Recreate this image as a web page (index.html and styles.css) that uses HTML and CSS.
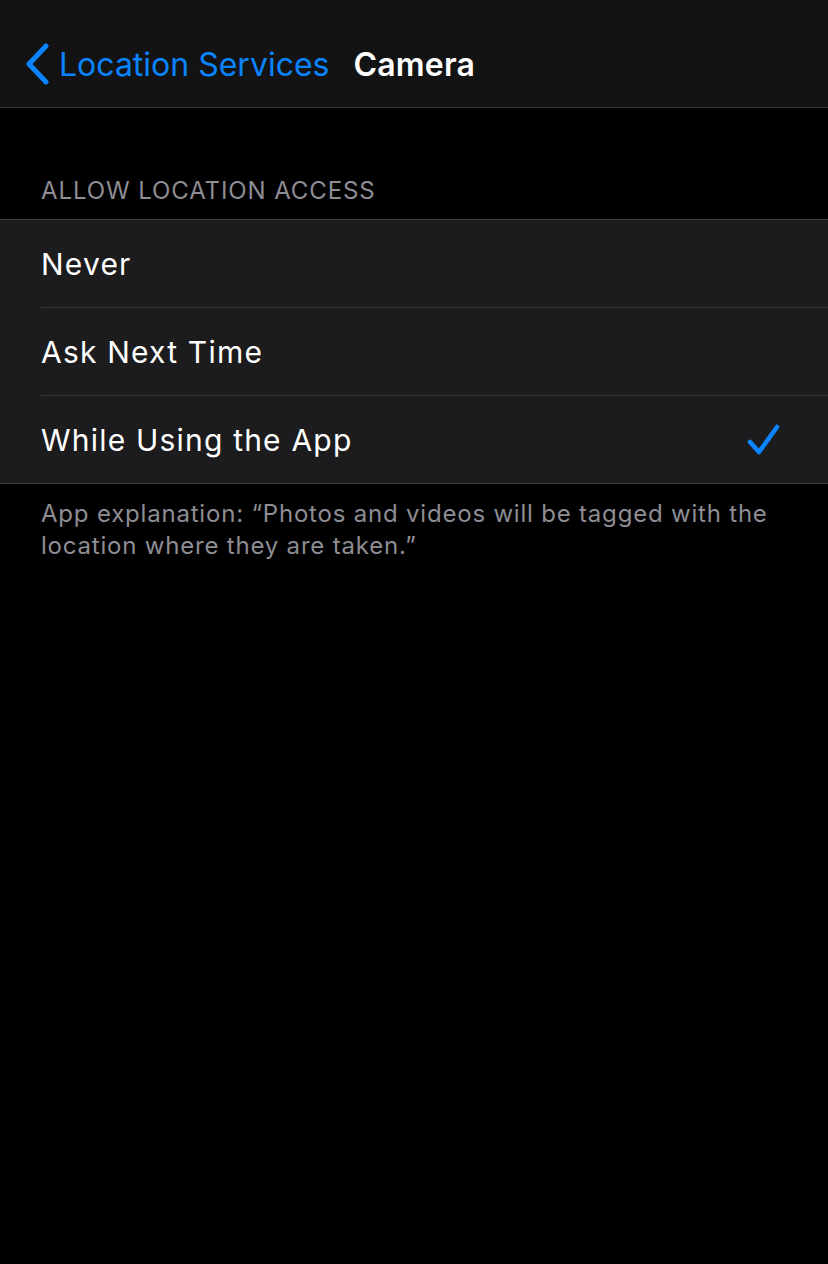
FILE: index.html
```html
<!DOCTYPE html>
<html>
<head>
<meta charset="utf-8">
<link rel="stylesheet" href="styles.css">
</head>
<body>
<div class="screen">
  <header class="nav">
    <a class="back">
      <svg class="chev" width="26" height="42" viewBox="0 0 26 42"><path d="M22 3 L5 21 L22 39" fill="none" stroke="#0a84ff" stroke-width="5" stroke-linecap="round" stroke-linejoin="round"/></svg>
      <span class="back-label">Location Services</span>
    </a>
    <span class="title">Camera</span>
  </header>
  <section class="group">
    <div class="group-header">ALLOW LOCATION ACCESS</div>
    <ul class="list">
      <li class="row"><span class="row-label">Never</span></li>
      <li class="row"><span class="row-label">Ask Next Time</span></li>
      <li class="row"><span class="row-label">While Using the App</span>
        <svg class="check" width="36" height="34" viewBox="0 0 36 34"><path d="M4 19 L13 29 L31 4" fill="none" stroke="#0a84ff" stroke-width="4.5" stroke-linecap="round" stroke-linejoin="round"/></svg>
      </li>
    </ul>
    <p class="group-footer">App explanation: “Photos and videos will be tagged with the location where they are taken.”</p>
  </section>
</div>
</body>
</html>
```

FILE: styles.css
```css
html, body {
  margin: 0;
  padding: 0;
  background: #000;
}
body {
  font-family: Inter, "Noto Sans", "Liberation Sans", sans-serif;
  width: 828px;
  height: 1264px;
  overflow: hidden;
}
.nav {
  height: 108px;
  box-sizing: border-box;
  background: #131313;
  border-bottom: 1px solid #333335;
  display: flex;
  align-items: center;
  padding-left: 24px;
  padding-top: 21px;
}
.back {
  display: flex;
  align-items: center;
  color: #0a84ff;
}
.chev {
  display: block;
  margin-right: 9px;
}
.back-label {
  font-size: 32px;
  letter-spacing: 0;
}
.title {
  margin-left: 24px;
  color: #fff;
  font-weight: 600;
  font-size: 32px;
  letter-spacing: 0.2px;
}
.group {
  padding-top: 67px;
}
.group-header {
  padding-left: 41px;
  color: #8d8d93;
  font-size: 24px;
  letter-spacing: 0.9px;
  height: 44px;
  line-height: 32px;
}
.list {
  list-style: none;
  margin: 0;
  padding: 0;
  background: #1c1c1e;
  border-top: 1px solid #3d3d40;
  border-bottom: 1px solid #3d3d40;
}
.row {
  height: 88px;
  margin-left: 41px;
  padding-right: 46px;
  display: flex;
  align-items: center;
  justify-content: space-between;
  border-bottom: 1px solid #38383a;
  box-sizing: border-box;
  color: #fff;
  font-size: 30px;
}
.row:last-child {
  border-bottom: none;
  height: 87px;
}
.row-label {
  letter-spacing: 1.2px;
}
.check {
  display: block;
}
.group-footer {
  margin: 0;
  padding: 14px 41px 0 41px;
  color: #8d8d93;
  font-size: 24px;
  line-height: 32px;
  letter-spacing: 0.8px;
}
```
